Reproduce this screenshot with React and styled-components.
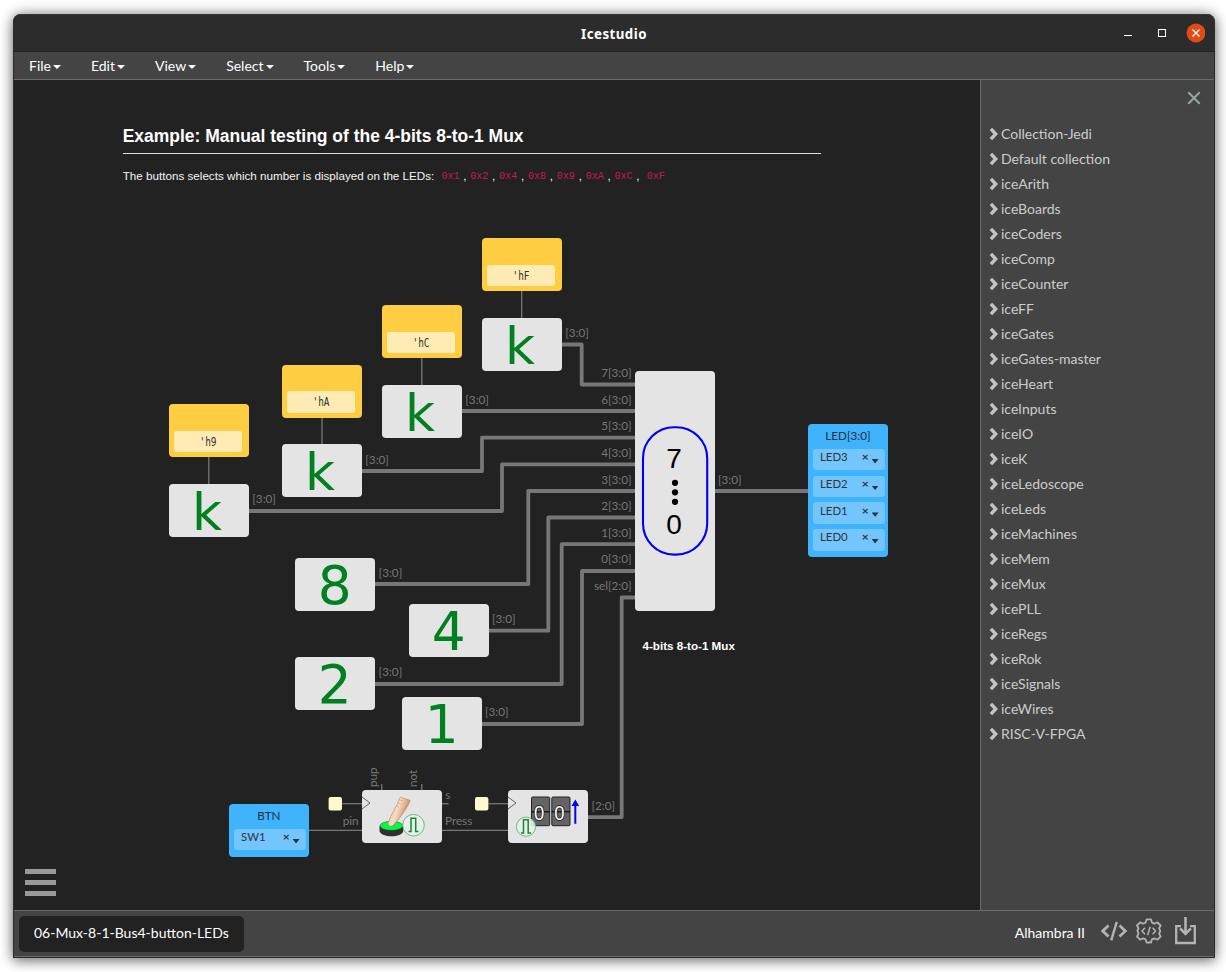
import React from "react";
import styled, { createGlobalStyle } from "styled-components";

const WIRE = "#777777";
const ORIGIN_X = 14;
const ORIGIN_Y = 80;

const GlobalStyle = createGlobalStyle`
  * { box-sizing: border-box; }
  body {
    margin: 0;
    background: #fff;
    font-family: Lato, "Open Sans", sans-serif;
    font-size: 14px;
    overflow: hidden;
  }
`;

const Desktop = styled.div`
  width: 1226px;
  height: 972px;
  padding: 14px 11px 14px 13px;
  overflow: hidden;
`;

const Window = styled.div`
  display: flex;
  flex-direction: column;
  width: 1202px;
  height: 944px;
  border: 1px solid #2b2b2b;
  border-top: 0;
  border-radius: 8px 8px 0 0;
  background: #444;
  box-shadow: 0 0 14px rgba(0, 0, 0, 0.42), 0 4px 12px rgba(0, 0, 0, 0.3);
`;

const TitleBar = styled.header`
  display: grid;
  grid-template-columns: 1fr auto 1fr;
  align-items: center;
  height: 38px;
  flex: none;
  margin: 0 -1px;
  padding: 0 10px;
  border-top: 1px solid #383838;
  border-bottom: 1px solid #232323;
  border-radius: 8px 8px 0 0;
  background: #2c2c2c;
`;

const Title = styled.h1`
  grid-column: 2;
  margin: 0;
  color: #fff;
  font: 700 13.3px/18px "Noto Sans", sans-serif;
  letter-spacing: 0.45px;
  padding-top: 2px;
`;

const WindowButtons = styled.div`
  display: flex;
  justify-content: flex-end;
  height: 20px;
`;

const MenuBar = styled.nav`
  display: flex;
  height: 28px;
  flex: none;
  border-bottom: 1px solid #6b6b6b;
  background: #444;
`;

const MenuItem = styled.div`
  display: flex;
  align-items: center;
  padding: 0 15px;
  color: #fff;
  line-height: 20px;
  height: 28px;
`;

const Caret = styled.span`
  margin-left: 2px;
  margin-top: 1px;
  border-top: 4px solid #fff;
  border-left: 4px solid transparent;
  border-right: 4px solid transparent;
`;

const Body = styled.div`
  display: flex;
  height: 830px;
  flex: none;
`;

const Canvas = styled.main`
  position: relative;
  width: 966px;
  background: #222;
`;

const Drawing = styled.svg`
  display: block;
  width: 966px;
  height: 830px;
`;

const Placed = styled.div`
  position: absolute;
  left: ${(p) => p.$x - ORIGIN_X}px;
  top: ${(p) => p.$y - ORIGIN_Y}px;
`;

const Note = styled(Placed)`
  width: 698.8px;
  color: #f4f4f4;
  font-family: "Liberation Sans", Arial, sans-serif;
  font-size: 11.66px;
  line-height: 16px;
  white-space: nowrap;
`;

const NoteHeading = styled.h2`
  margin: 0 0 14px;
  padding-bottom: 5px;
  border-bottom: 1px solid #ddd;
  color: #fff;
  font-size: 17.48px;
  line-height: 24px;
`;

const NoteText = styled.p`
  margin: 0;
`;

const Code = styled.code`
  position: relative;
  top: -1px;
  padding: 0 3.8px;
  color: #c01c4e;
  font: 10px/12px "Liberation Mono", monospace;
`;

const NoteCaption = styled(Note)`
  width: auto;
  color: #fff;
  font-weight: 700;
  font-size: 11.64px;
`;

const Block = styled(Placed)`
  width: 79.8px;
  height: ${(p) => p.$h ?? 53.2}px;
  border-radius: 4px;
  background: #e4e4e4;
`;

const Symbol = styled.svg`
  display: block;
  overflow: visible;
`;

const ConstantBlock = styled(Block)`
  display: flex;
  align-items: flex-end;
  padding: 5px 6px 5px 5px;
  background: #ffcd42;
`;

const ConstantField = styled.div`
  width: 68.2px;
  height: 21.5px;
  border-radius: 3px;
  background: #ffecb5;
  color: #333;
  text-align: center;
  font: 10px/22px "DejaVu Sans Mono", monospace;
`;

const FieldText = styled.span`
  display: inline-block;
  transform: scale(0.94, 1.2);
`;

const IoBlock = styled(Block)`
  display: flex;
  flex-direction: column;
  align-items: flex-start;
  gap: 5.2px;
  padding: 4px 3px 0 5px;
  background: #3fb3fb;
  color: #20303c;
`;

const IoTitle = styled.div`
  align-self: center;
  height: 15.8px;
  padding-right: 2px;
  font-size: 11.7px;
  line-height: 14.4px;
`;

const PinSelect = styled.div`
  display: flex;
  align-items: center;
  width: 71.6px;
  height: 21.5px;
  padding: 0 6px 5px 7px;
  border-radius: 3px;
  background: #73c5fd;
  color: #333;
  font-size: 11.4px;
  line-height: 16px;
`;

const ClearMark = styled.span`
  margin-left: auto;
  font: 700 12px/14px Lato, sans-serif;
`;

const PinCaret = styled.span`
  width: 7px;
  height: 4.4px;
  margin: 8px 0 0 3px;
  background: #333;
  clip-path: polygon(0 0, 100% 0, 50% 100%);
`;

const Sidebar = styled.aside`
  display: flex;
  flex-direction: column;
  width: 234px;
  border-left: 1px solid #6b6b6b;
  background: #444;
`;

const SidebarHead = styled.div`
  display: flex;
  justify-content: flex-end;
  height: 41px;
  padding: 11px 13px 0 0;
`;

const CollectionRow = styled.div`
  display: flex;
  align-items: center;
  gap: 3px;
  height: 25px;
  padding-left: 8px;
  color: #ccc;
  line-height: 20px;
`;

const StatusBar = styled.footer`
  display: flex;
  align-items: center;
  flex: 1;
  padding: 0 18px 0 5px;
  border-top: 1px solid #6b6b6b;
  border-bottom: 1px solid #6b6b6b;
  background: #444;
  color: #fff;
`;

const ProjectTab = styled.div`
  height: 36px;
  width: 225px;
  margin-right: auto;
  padding: 0 15px;
  border-radius: 5px;
  background: #222;
  line-height: 34px;
`;

const BoardName = styled.span`
  margin-right: 14px;
  padding-bottom: 2px;
  line-height: 20px;
`;

const StatusIcons = styled.div`
  display: flex;
  align-items: center;
  height: 34px;
  padding-bottom: 2px;
`;

const menus = ["File", "Edit", "View", "Select", "Tools", "Help"];

const collections = [
  "Collection-Jedi", "Default collection", "iceArith", "iceBoards", "iceCoders",
  "iceComp", "iceCounter", "iceFF", "iceGates", "iceGates-master", "iceHeart",
  "iceInputs", "iceIO", "iceK", "iceLedoscope", "iceLeds", "iceMachines",
  "iceMem", "iceMux", "icePLL", "iceRegs", "iceRok", "iceSignals", "iceWires",
  "RISC-V-FPGA",
];

const constants = [
  { x: 482, y: 238, value: "'hF" },
  { x: 382, y: 305, value: "'hC" },
  { x: 282, y: 364.8, value: "'hA" },
  { x: 169, y: 404, value: "'h9" },
];

const generators = [
  { x: 482, y: 318, glyph: "k" },
  { x: 382, y: 385, glyph: "k" },
  { x: 282, y: 444, glyph: "k" },
  { x: 169, y: 484, glyph: "k" },
  { x: 295, y: 558, glyph: "8" },
  { x: 409, y: 604, glyph: "4" },
  { x: 295, y: 657, glyph: "2" },
  { x: 402, y: 697, glyph: "1" },
];

const buses = [
  "M562 344.5H581.7V384.5H635",
  "M462 411H635",
  "M362 471H482V437.7H635",
  "M249 511H502V464.3H635",
  "M375 584H528.3V491H635",
  "M489 630.7H548.3V517.5H635",
  "M375 684H561.7V544.2H635",
  "M482 724H582V571H635",
  "M588 817.2H621.7V597.5H635",
  "M715 491H808",
];

const thinWires = [
  "M521.7 291V318", "M421.8 358V385", "M322 418V444", "M208.8 457V484",
  "M342 803.7H362", "M309 830.3H362", "M381.8 784V790", "M421.8 784V790",
  "M442 803.7H448.5", "M442 830.3H508", "M488.5 803.7H508",
];

const busLabels = [
  [565.3, 336.7], [465.3, 403.7], [365.3, 463.7], [252.3, 503], [378.6, 577],
  [492, 623], [378.6, 676], [485, 716], [718, 484],
];

const muxInputs = [
  ["7[3:0]", 377], ["6[3:0]", 404], ["5[3:0]", 430], ["4[3:0]", 457],
  ["3[3:0]", 484], ["2[3:0]", 510], ["1[3:0]", 537], ["0[3:0]", 563.3],
  ["sel[2:0]", 590.2],
];

function Wires() {
  return (
    <>
      <g fill="none" stroke={WIRE} strokeLinejoin="round">
        {buses.map((d) => <path key={d} d={d} strokeWidth="3.8" />)}
        {thinWires.map((d) => <path key={d} d={d} strokeWidth="1.3" />)}
      </g>
      <g fill={WIRE} fontFamily="Lato, sans-serif" fontSize="11.7">
        {busLabels.map(([x, y]) => <text key={`${x}-${y}`} x={x} y={y}>[3:0]</text>)}
        {muxInputs.map(([t, y]) => <text key={t} x="631.6" y={y} textAnchor="end">{t}</text>)}
        <text x="591.5" y="809.5">[2:0]</text>
        <text x="342.7" y="825">pin</text>
        <text x="445.3" y="799">s</text>
        <text x="445" y="825">Press</text>
        <text transform="translate(377 787) rotate(-90)">pup</text>
        <text transform="translate(417 787) rotate(-90)">not</text>
      </g>
      <g fill="#fdfad0">
        <rect x="328.6" y="797" width="13.4" height="13.6" rx="2" />
        <rect x="475" y="797" width="13.4" height="13.6" rx="2" />
      </g>
    </>
  );
}

function GeneratorBlock({ x, y, glyph }) {
  return (
    <Block $x={x} $y={y}>
      <Symbol width="80" height="53">
        <text x={glyph === "k" ? 22.9 : 22.8} y="46" fill="#008020" fontFamily="DejaVu Sans, sans-serif"
          fontSize={glyph === "k" ? 51.8 : 53.3}>{glyph}</text>
      </Symbol>
    </Block>
  );
}

function MuxSymbol() {
  return (
    <Symbol width="80" height="239">
      <rect x="8" y="56.2" width="64.2" height="127.4" rx="31" fill="none" stroke="#0000f5" strokeWidth="2.1" />
      <g fontFamily="Liberation Sans, sans-serif" fontSize="28" textAnchor="middle">
        <text x="39.1" y="96.7">7</text>
        <text x="39.1" y="163.3">0</text>
      </g>
      <circle cx="40" cy="111.8" r="3.1" />
      <circle cx="40" cy="121.3" r="3.1" />
      <circle cx="40" cy="130.8" r="3.1" />
    </Symbol>
  );
}

function ClockEdge() {
  return <path d="M0 7L8 13L0 19" fill="none" stroke="#555" strokeWidth="0.9" />;
}

function PulseMark({ x, y, r }) {
  return (
    <g fill="none" transform={`translate(${x} ${y})`}>
      <circle r={r} stroke="#4fae68" strokeWidth="0.8" fill="#e8eee8" fillOpacity="0.9" />
      <path d="M-5 6.3H-2.5V-6.9H2.2V6.3H5" stroke="#138a36" strokeWidth="1.5" />
    </g>
  );
}

function ButtonSymbol() {
  return (
    <Symbol width="80" height="53">
      <defs>
        <linearGradient id="finger" x1="0" x2="1" y1="0" y2="0.45">
          <stop offset="0" stopColor="#e5b993" />
          <stop offset="0.5" stopColor="#fbdcc0" />
          <stop offset="1" stopColor="#b97c55" />
        </linearGradient>
      </defs>
      <ClockEdge />
      <path d="M17.5 36V41C19 48 40 48 41.3 41V36Z" fill="#30302f" />
      <ellipse cx="29.4" cy="35.8" rx="11.4" ry="4.5" fill="#08f548" stroke="#1b5e2b" strokeWidth="0.5" />
      <path d="M38.2 7.2L48.2 10.4C45.5 18 36.5 30 31.5 35C29 37.4 25.2 36 26.3 32.3C28.5 25 35.5 15.5 38.2 7.2Z" fill="url(#finger)" stroke="#a56f4c" strokeWidth="0.5" />
      <path d="M37.5 10L41 11M36 13L39 14M34.5 16L37 17" stroke="#c99470" strokeWidth="0.5" />
      <PulseMark x={51.5} y={35.2} r={10.8} />
    </Symbol>
  );
}

function CounterSymbol() {
  return (
    <Symbol width="80" height="53">
      <ClockEdge />
      {[23.5, 43.8].map((x) => (
        <g key={x}>
          <rect x={x} y="7" width="18.2" height="28.7" rx="1.2" fill="#646464" stroke="#222" strokeWidth="1" />
          <path d={`M${x} 21.8h18.2`} stroke="#111" strokeWidth="1.3" />
          <text transform={`translate(${x + 7.7} 29.6) scale(0.88 1)`} textAnchor="middle" fill="#fff"
            stroke="#111" strokeWidth="1.6" paintOrder="stroke"
            fontFamily="Liberation Sans, sans-serif" fontSize="21">0</text>
        </g>
      ))}
      <path d="M67.3 33.8V14" stroke="#0000ff" strokeWidth="2" />
      <path d="M63.5 16L67.3 9.5L71.2 16Z" fill="#0000ff" />
      <PulseMark x={18} y={36.7} r={9.6} />
    </Symbol>
  );
}

function IoNode({ x, y, h, title, pins }) {
  return (
    <IoBlock $x={x} $y={y} $h={h}>
      <IoTitle>{title}</IoTitle>
      {pins.map((pin) => (
        <PinSelect key={pin}>
          {pin}
          <ClearMark>×</ClearMark>
          <PinCaret />
        </PinSelect>
      ))}
    </IoBlock>
  );
}

function ExampleNote() {
  const values = ["0x1", "0x2", "0x4", "0x8", "0x9", "0xA", "0xC"];
  return (
    <Note $x={122.7} $y={123.5}>
      <NoteHeading>Example: Manual testing of the 4-bits 8-to-1 Mux</NoteHeading>
      <NoteText>
        The buttons selects which number is displayed on the LEDs:{" "}
        {values.map((v) => <React.Fragment key={v}><Code>{v}</Code>,</React.Fragment>)}
        {" "}<Code>0xF</Code>
      </NoteText>
    </Note>
  );
}

export default function App() {
  return (
    <Desktop>
      <GlobalStyle />
      <Window>
        <TitleBar>
          <span />
          <Title>Icestudio</Title>
          <WindowButtons>
            <svg width="86" height="20">
              <g fill="none" stroke="#fff">
                <path d="M5 12.5h8" />
                <rect x="39.5" y="6.5" width="7" height="7" />
              </g>
              <circle cx="77" cy="10" r="9.4" fill="#e24a17" />
              <path d="M73.5 6.5l7 7M80.5 6.5l-7 7" stroke="#fff" strokeWidth="1.4" />
            </svg>
          </WindowButtons>
        </TitleBar>
        <MenuBar>
          {menus.map((m) => <MenuItem key={m}>{m}<Caret /></MenuItem>)}
        </MenuBar>
        <Body>
          <Canvas>
            <Drawing viewBox={`${ORIGIN_X} ${ORIGIN_Y} 966 830`}>
              <Wires />
              <path d="M25 871.5H56M25 882.5H56M25 893.5H56" stroke="#999" strokeWidth="5" />
            </Drawing>
            <ExampleNote />
            {constants.map((c) => (
              <ConstantBlock key={c.value} $x={c.x} $y={c.y}>
                <ConstantField><FieldText>{c.value}</FieldText></ConstantField>
              </ConstantBlock>
            ))}
            {generators.map((g) => <GeneratorBlock key={`${g.x}-${g.y}`} {...g} />)}
            <Block $x={635} $y={371} $h={239.5}><MuxSymbol /></Block>
            <NoteCaption $x={642.5} $y={638}>4-bits 8-to-1 Mux</NoteCaption>
            <IoNode x={808} y={424} h={133} title="LED[3:0]" pins={["LED3", "LED2", "LED1", "LED0"]} />
            <IoNode x={229} y={804} h={53.3} title="BTN" pins={["SW1"]} />
            <Block $x={362} $y={790}><ButtonSymbol /></Block>
            <Block $x={508} $y={790}><CounterSymbol /></Block>
          </Canvas>
          <Sidebar>
            <SidebarHead>
              <svg width="14" height="14">
                <path d="M1.3 1.3l11.4 11.4M12.7 1.3L1.3 12.7" stroke="#95a5a6" strokeWidth="2" />
              </svg>
            </SidebarHead>
            {collections.map((name) => (
              <CollectionRow key={name}>
                <svg width="9" height="14">
                  <path d="M1.9 1.8L6.7 7L1.9 12.2" fill="none" stroke="#c4c4c4" strokeWidth="3.4" />
                </svg>
                {name}
              </CollectionRow>
            ))}
          </Sidebar>
        </Body>
        <StatusBar>
          <ProjectTab>06-Mux-8-1-Bus4-button-LEDs</ProjectTab>
          <BoardName>Alhambra II</BoardName>
          <StatusIcons>
            <svg width="97" height="34" fill="none" stroke="#b3b3b3" overflow="visible">
              <path d="M9.5 9.5L3.7 15L9.5 20.5M20.5 9.5L26.3 15L20.5 20.5" strokeWidth="2.8" />
              <path d="M17.8 5.8L12.2 24.3" strokeWidth="2.4" />
              <path d="M47.6 3.4h4.4l1 3.2 2.5 1.1 2.9-1.4 3.2 3.2-1.5 2.8 1 2.2 0 1-1 2.2 1.5 2.9-3.2 3.1-2.9-1.4-2.5 1-1 3.2h-4.4l-1-3.2-2.5-1-2.9 1.4-3.2-3.1 1.5-2.9-1.1-3.2 1.1-2.2-1.5-2.8 3.2-3.2 2.9 1.4 2.5-1.1z" strokeWidth="1.8" strokeLinejoin="round" />
              <path d="M46 11.7L43 15l3 3.3M53.6 11.7l3 3.3-3 3.3M51.2 10.7l-2.6 8.6" strokeWidth="1.5" />
              <path d="M82 10.2H77.2V27H95.8V10.2H91" strokeWidth="2.3" />
              <path d="M86.5 1V17.3M81.1 12.3L86.5 17.8L91.9 12.3" strokeWidth="2.6" />
            </svg>
          </StatusIcons>
        </StatusBar>
      </Window>
    </Desktop>
  );
}
